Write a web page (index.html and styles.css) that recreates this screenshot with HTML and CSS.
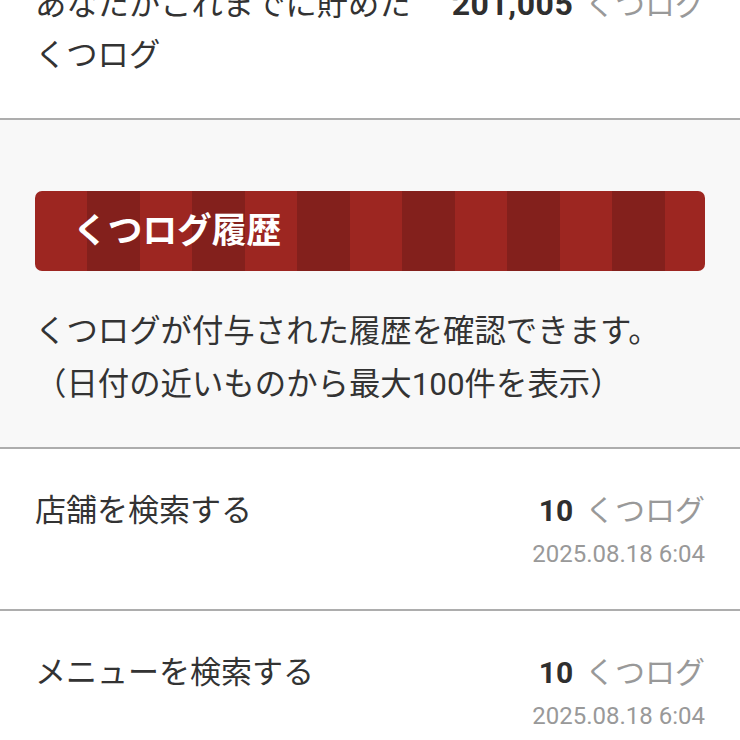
FILE: index.html
```html
<!DOCTYPE html>
<html lang="ja">
<head>
<meta charset="utf-8">
<title>くつログ履歴</title>
<link rel="stylesheet" href="styles.css">
</head>
<body>
<div class="page">
  <section class="total">
    <div class="total-label">あなたがこれまでに貯めたくつログ</div>
    <div class="total-value"><span class="num">201,005</span> <span class="unit">くつログ</span></div>
  </section>
  <section class="intro">
    <div class="banner">くつログ履歴</div>
    <p class="desc">くつログが付与された履歴を確認できます。<br>（日付の近いものから最大100件を表示）</p>
  </section>
  <ul class="history">
    <li class="row">
      <div class="row-title">店舗を検索する</div>
      <div class="row-right">
        <div class="points"><span class="num">10</span> <span class="unit">くつログ</span></div>
        <div class="date">2025.08.18 6:04</div>
      </div>
    </li>
    <li class="row">
      <div class="row-title">メニューを検索する</div>
      <div class="row-right">
        <div class="points"><span class="num">10</span> <span class="unit">くつログ</span></div>
        <div class="date">2025.08.18 6:04</div>
      </div>
    </li>
  </ul>
</div>
</body>
</html>
```
FILE: styles.css
```css
* { box-sizing: border-box; }
html, body { margin: 0; padding: 0; background: #ffffff; }
body {
  font-family: Roboto, "Noto Sans CJK JP", sans-serif;
  color: #333333;
  font-size: 31px;
  overflow: hidden;
}
.page { width: 740px; }

.total {
  display: flex;
  justify-content: space-between;
  align-items: flex-start;
  margin-top: -21px;
  padding: 0 35px 37px 35px;
  line-height: 51px;
  font-size: 31.3px;
  border-bottom: 2px solid #adadad;
}
.total-label { width: 385px; }
.total-value { white-space: nowrap; }
.total-value .num { font-size: 32px; letter-spacing: 0.5px; }
.total-value .unit { font-size: 30px; }

.num { font-weight: 700; color: #2f2f2f; font-size: 30px; }
.unit { color: #999999; font-size: 30px; margin-left: 4px; }

.intro {
  background: #f8f8f8;
  padding: 71px 35px 36px 35px;
  border-bottom: 2px solid #adadad;
}
.banner {
  height: 80px;
  border-radius: 7px;
  background: repeating-linear-gradient(90deg, #9d2621 0 52.5px, #83201c 52.5px 105px);
  color: #ffffff;
  font-weight: 700;
  font-size: 34.7px;
  line-height: 80px;
  padding-left: 38px;
}
.desc {
  margin: 34px 0 0 0;
  line-height: 53px;
  font-size: 31.4px;
  color: #333333;
}

.history { list-style: none; margin: 0; padding: 0; }
.row {
  display: flex;
  justify-content: space-between;
  align-items: flex-start;
  height: 162px;
  padding: 37px 35px 0 35px;
  border-bottom: 2px solid #adadad;
}
.row-title { line-height: 50px; }
.row-right { text-align: right; }
.points { line-height: 50px; white-space: nowrap; }
.date {
  font-size: 24px;
  color: #999999;
  line-height: 38px;
  margin-top: -1px;
}
```
